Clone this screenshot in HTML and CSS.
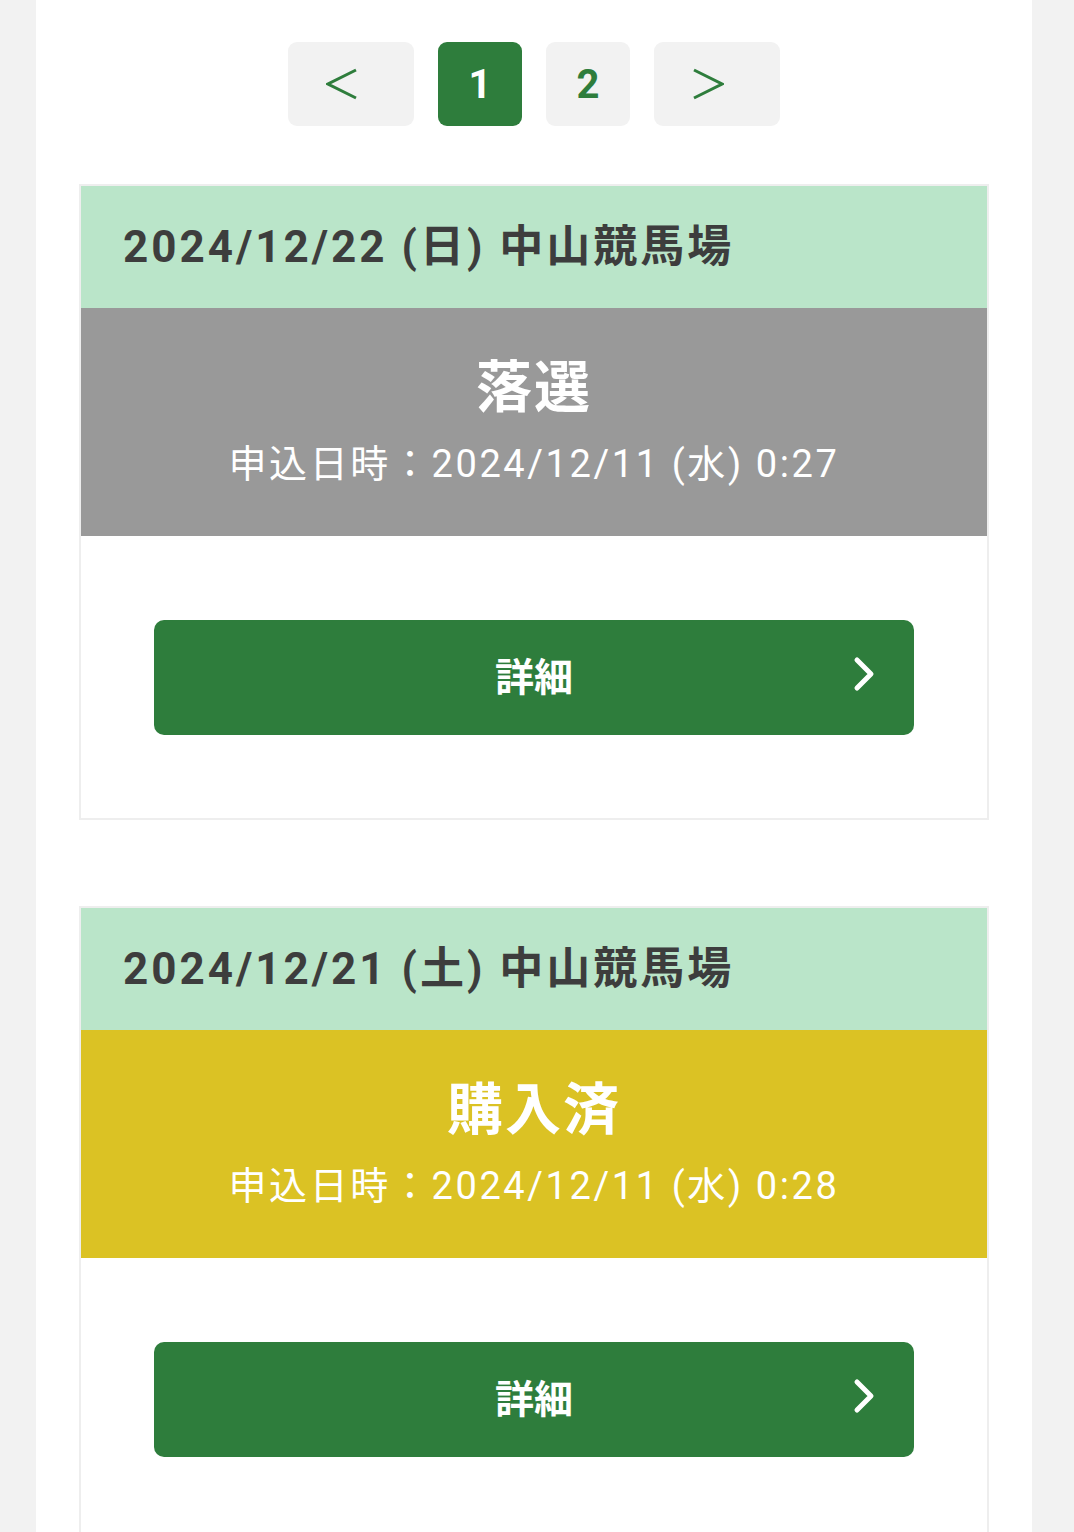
FILE: index.html
```html
<!DOCTYPE html>
<html lang="ja">
<head>
    <meta charset="UTF-8">
    <title>申込履歴</title>

    <link rel="stylesheet" href="styles.css">
</head>
<body>
<div class="page">
    <div class="container">
        <nav class="pager">
            <a class="pager-item pager-arrow" href="#">
                <svg width="32" height="32" viewBox="0 0 32 32">
                    <path d="M30 2 L2 16 L30 30" fill="none" stroke="#2e7d3c" stroke-width="3"/>
                </svg>
            </a>
            <a class="pager-item pager-num is-current" href="#">1</a>
            <a class="pager-item pager-num" href="#">2</a>
            <a class="pager-item pager-arrow" href="#">
                <svg width="32" height="32" viewBox="0 0 32 32">
                    <path d="M2 2 L30 16 L2 30" fill="none" stroke="#2e7d3c" stroke-width="3"/>
                </svg>
            </a>
        </nav>

        <div class="entry">
            <div class="entry-head">2024/12/22 (日) 中山競馬場</div>
            <div class="entry-status status-lost">
                <div class="status-title">落選</div>
                <div class="status-date">申込日時：2024/12/11 (水) 0:27</div>
            </div>
            <div class="entry-body">
                <a class="detail-btn" href="#">
                    詳細
                    <svg class="detail-icon" width="24" height="36" viewBox="0 0 24 36">
                        <path d="M5 4 L19 18 L5 32" fill="none" stroke="#fff" stroke-width="5" stroke-linecap="round" stroke-linejoin="round"/>
                    </svg>
                </a>
            </div>
        </div>

        <div class="entry">
            <div class="entry-head">2024/12/21 (土) 中山競馬場</div>
            <div class="entry-status status-bought">
                <div class="status-title">購入済</div>
                <div class="status-date">申込日時：2024/12/11 (水) 0:28</div>
            </div>
            <div class="entry-body">
                <a class="detail-btn" href="#">
                    詳細
                    <svg class="detail-icon" width="24" height="36" viewBox="0 0 24 36">
                        <path d="M5 4 L19 18 L5 32" fill="none" stroke="#fff" stroke-width="5" stroke-linecap="round" stroke-linejoin="round"/>
                    </svg>
                </a>
            </div>
        </div>
    </div>
</div>
</body>
</html>
```

FILE: styles.css
```css
body {
    margin: 0;
    background-color: #f2f2f2;
    font-family: Roboto, "Noto Sans CJK JP", sans-serif;
    color: #3d3d3d;
}

.page {
    padding: 0 42px 0 36px;
}

.container {
    background-color: #fff;
    padding: 42px 43px 40px;
    min-height: 1532px;
    box-sizing: border-box;
}

.pager {
    display: flex;
    justify-content: center;
    gap: 24px;
    margin-bottom: 58px;
}

.pager-item {
    display: flex;
    align-items: center;
    justify-content: center;
    height: 84px;
    border-radius: 9px;
    background-color: #f2f2f2;
    color: #2e7d3c;
    text-decoration: none;
}

.pager-arrow {
    width: 126px;
}

.pager-arrow svg {
    margin-right: 18px;
}

.pager-num {
    width: 84px;
    font-size: 40px;
    font-weight: 700;
}

.pager-num.is-current {
    background-color: #2e7d3c;
    color: #fff;
}

.entry {
    border: 2px solid #eeeeee;
    margin-bottom: 86px;
}

.entry-head {
    background-color: #bae5c9;
    height: 122px;
    line-height: 122px;
    padding: 0 42px;
    font-size: 44px;
    font-weight: 700;
    letter-spacing: 3px;
    color: #3d3d3d;
}

.entry-status {
    padding: 42px 0 46px;
    text-align: center;
    color: #fff;
}

.status-lost {
    background-color: #999999;
}

.status-bought {
    background-color: #dbc224;
}

.status-title {
    font-size: 56px;
    line-height: 76px;
    font-weight: 700;
    letter-spacing: 2px;
}

.status-date {
    margin-top: 12px;
    font-size: 38px;
    line-height: 52px;
    letter-spacing: 2.6px;
}

.entry-body {
    padding: 84px 73px 83px;
}

.detail-btn {
    position: relative;
    display: flex;
    align-items: center;
    justify-content: center;
    height: 115px;
    padding-bottom: 8px;
    box-sizing: border-box;
    border-radius: 10px;
    background-color: #2e7d3c;
    color: #fff;
    font-size: 39px;
    font-weight: 700;
    text-decoration: none;
}

.detail-icon {
    position: absolute;
    right: 38px;
    top: 36px;
}
```
